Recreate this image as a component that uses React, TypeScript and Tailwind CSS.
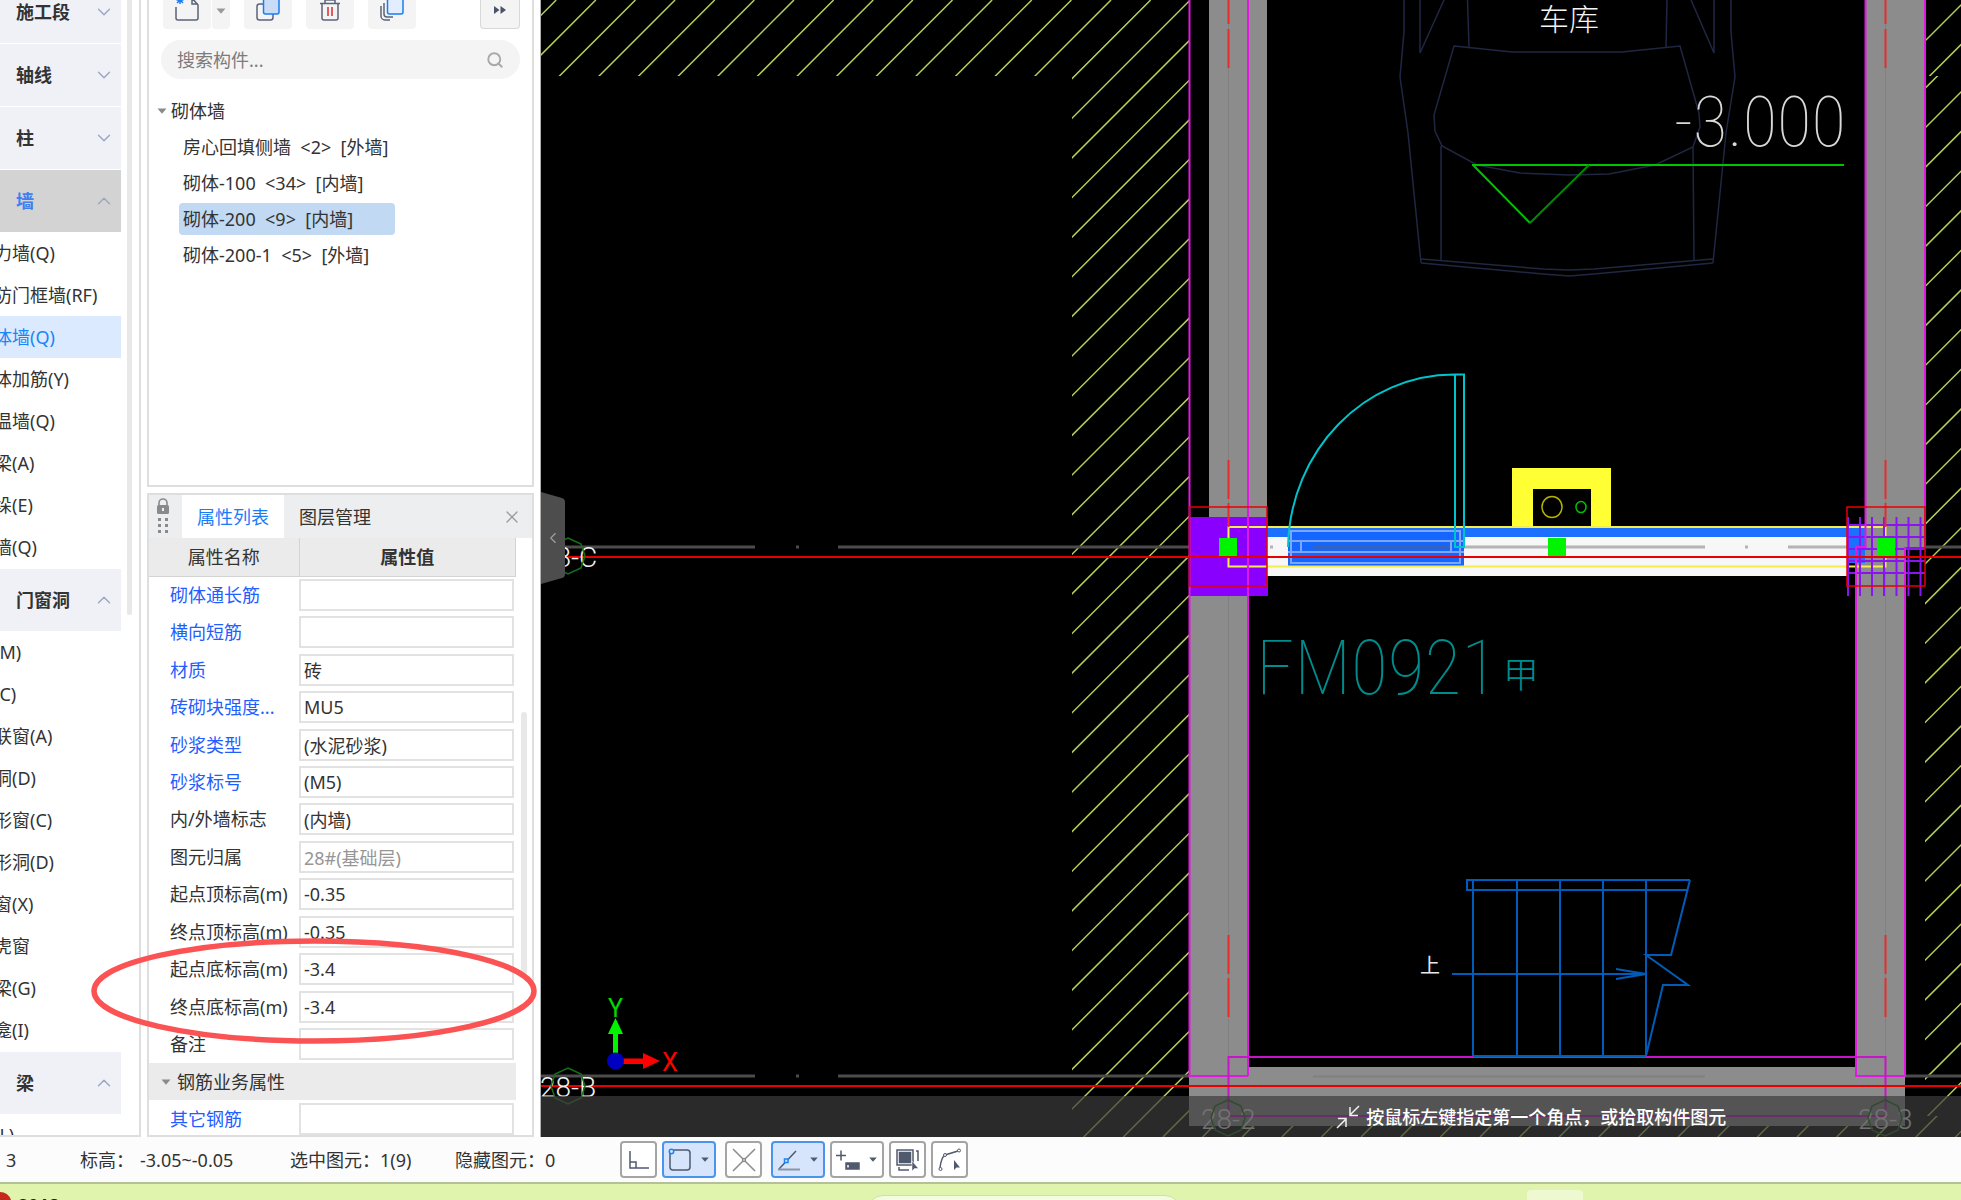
import type { ReactNode } from 'react';
import { ChevronDown, ChevronLeft, ChevronUp, Search, X } from 'lucide-react';

type Group = { name: string; open?: boolean; active?: boolean; items?: string[] };

const groups: Group[] = [
  { name: '施工段' },
  { name: '轴线' },
  { name: '柱' },
  {
    name: '墙',
    open: true,
    active: true,
    items: ['力墙(Q)', '防门框墙(RF)', '体墙(Q)', '体加筋(Y)', '温墙(Q)', '梁(A)', '垛(E)', '墙(Q)'],
  },
  {
    name: '门窗洞',
    open: true,
    items: ['(M)', '(C)', '联窗(A)', '洞(D)', '形窗(C)', '形洞(D)', '窗(X)', '虎窗', '梁(G)', '龛(I)'],
  },
  { name: '梁', open: true, items: ['(L)'] },
];

const components = [
  '房心回填侧墙  <2>  [外墙]',
  '砌体-100  <34>  [内墙]',
  '砌体-200  <9>  [内墙]',
  '砌体-200-1  <5>  [外墙]',
];

const properties = [
  { name: '砌体通长筋', value: '', blue: true },
  { name: '横向短筋', value: '', blue: true },
  { name: '材质', value: '砖', blue: true },
  { name: '砖砌块强度...', value: 'MU5', blue: true },
  { name: '砂浆类型', value: '(水泥砂浆)', blue: true },
  { name: '砂浆标号', value: '(M5)', blue: true },
  { name: '内/外墙标志', value: '(内墙)' },
  { name: '图元归属', value: '28#(基础层)', disabled: true },
  { name: '起点顶标高(m)', value: '-0.35' },
  { name: '终点顶标高(m)', value: '-0.35' },
  { name: '起点底标高(m)', value: '-3.4' },
  { name: '终点底标高(m)', value: '-3.4' },
  { name: '备注', value: '' },
  { name: '钢筋业务属性', value: '', group: true },
  { name: '其它钢筋', value: '', blue: true },
];

function Sidebar() {
  return (
    <nav className="flex w-[141px] shrink-0 overflow-hidden border-r-2 border-b-2 border-[#dedede] bg-white">
      <div className="-mt-5 flex w-[121px] shrink-0 flex-col">
        {groups.map((group) => (
          <div key={group.name}>
            <button
              className={`mt-px flex h-[62px] w-full items-center justify-between pr-1.5 pl-4 font-semibold ${
                group.active ? 'bg-[#d3d3d3] text-[#3f7ff0]' : 'bg-[#f0f1f6]'
              }`}
            >
              {group.name}
              {group.open ? (
                <ChevronUp className="size-[22px] text-[#9aa6c0]" strokeWidth={1.5} />
              ) : (
                <ChevronDown className="size-[22px] text-[#9aa6c0]" strokeWidth={1.5} />
              )}
            </button>
            {group.items?.map((item, i) => (
              <button
                key={i}
                className={`flex h-[42px] w-full items-center text-left whitespace-nowrap ${
                  item === '体墙(Q)' ? 'bg-[#dbeafe] text-[#1a86f5]' : ''
                }`}
              >
                <span className="-ml-1.5">{item}</span>
              </button>
            ))}
          </div>
        ))}
      </div>
      <div className="ml-1.5 h-[615px] w-[5px] shrink-0 rounded-b bg-[#e8e8e8]" />
    </nav>
  );
}

function Caret({ className = '' }: { className?: string }) {
  return (
    <svg viewBox="0 0 10 6" className={`h-1.5 w-2.5 shrink-0 ${className}`}>
      <path d="M0.5 0.5h9L5 5.8z" fill="currentColor" />
    </svg>
  );
}

function ToolButton({ label, children }: { label: string; children: ReactNode }) {
  return (
    <button aria-label={label} className="flex h-full w-12 items-end justify-center rounded-b bg-[#f4f4f4] pb-2">
      {children}
    </button>
  );
}

function ComponentList() {
  return (
    <section className="flex h-[487px] shrink-0 flex-col border-x-2 border-b-2 border-[#dedede]">
      <div className="flex h-[29px] items-stretch pr-3 pl-3.5">
        <ToolButton label="新建">
          <svg viewBox="0 0 24 22" className="h-[22px] w-6" fill="none" stroke="#5a6478" strokeWidth="1.5">
            <path d="M1 8v11a2 2 0 0 0 2 2h18a2 2 0 0 0 2-2V6l-6-7v6h6" />
            <path d="M1.500 1h7M5-3v8M2-2l6 6M8-2L2 4" stroke="#1a7cf5" />
          </svg>
        </ToolButton>
        <button aria-label="新建选项" className="ml-px flex w-[18px] items-start justify-center rounded-b bg-[#f4f4f4] pt-2 text-[#999]">
          <Caret className="w-2" />
        </button>
        <div className="ml-3.5 flex gap-3.5">
          <ToolButton label="复制">
            <svg viewBox="0 0 24 22" className="h-[22px] w-6" fill="none" strokeWidth="1.5">
              <rect x="1" y="5" width="16" height="16" rx="2.5" stroke="#5a6478" />
              <rect x="7.500" y="-2" width="15.500" height="17" rx="2" fill="#c9dcf5" stroke="#1a7cf5" />
            </svg>
          </ToolButton>
          <ToolButton label="删除">
            <svg viewBox="0 0 24 22" className="h-[22px] w-6" fill="none" stroke="#5a6478" strokeWidth="1.5">
              <path d="M2 4.500h20M7 4V1h10v3M4 5v14a2 2 0 0 0 2 2h12a2 2 0 0 0 2-2V5" />
              <path d="M10 8v9M14 8v9" stroke="#e02828" />
            </svg>
          </ToolButton>
          <ToolButton label="层间复制">
            <svg viewBox="0 0 24 22" className="h-[22px] w-6" fill="none" stroke="#5a6478" strokeWidth="1.5">
              <path d="M1 7v10a4 4 0 0 0 4 4h5M4 4v11a3 3 0 0 0 3 3h6" />
              <rect x="7.500" y="-2" width="15.500" height="17" rx="2" fill="#e2eefd" stroke="#1a7cf5" />
            </svg>
          </ToolButton>
        </div>
        <button
          aria-label="更多"
          className="ml-auto flex w-10 items-start justify-center rounded-b border-x border-b border-[#d8d8d8] bg-[#f4f4f4] pt-1.5"
        >
          <svg viewBox="0 0 12 8" className="h-2 w-3" fill="#4a5468">
            <path d="M0 0l5.500 4L0 8zM6.500 0L12 4l-5.500 4z" />
          </svg>
        </button>
      </div>
      <label className="mx-3 mt-[11px] flex h-[39px] items-center rounded-full bg-[#f4f4f4] pr-4 pl-4">
        <input
          aria-label="搜索构件"
          placeholder="搜索构件..."
          className="min-w-0 flex-1 bg-transparent outline-none placeholder:text-[#7c7c7c]"
        />
        <Search className="size-[18px] text-[#a8a8a8]" strokeWidth={2.5} />
      </label>
      <div className="mt-[14px] flex h-9 items-center gap-1 pl-2 text-[#8a8a8a]">
        <Caret />
        <span className="text-[#333]">砌体墙</span>
      </div>
      <ul className="pl-[30px]">
        {components.map((name, i) => (
          <li key={name} className="flex h-9 items-center">
            <button
              className={`h-8 w-[216px] rounded pl-1 text-left whitespace-pre ${i === 2 ? 'bg-[#c1d9f2]' : ''}`}
            >
              {name}
            </button>
          </li>
        ))}
      </ul>
    </section>
  );
}

function PropertyPanel() {
  return (
    <section className="mt-1.5 flex min-h-0 flex-1 flex-col overflow-hidden border-2 border-[#dedede]">
      <div className="flex h-[43px] shrink-0 items-stretch bg-[#edeef0]">
        <svg viewBox="0 0 33 43" className="h-[43px] w-[33px]" fill="#8a8a8e">
          <rect x="8" y="10" width="12" height="9" rx="1.500" />
          <path d="M10 11V8a4 4 0 0 1 8 0v3" fill="none" stroke="#8a8a8e" strokeWidth="1.600" />
          <rect x="13" y="13" width="2" height="3" fill="#edeef0" />
          {[23, 29, 35].map((y) => (
            <g key={y}>
              <rect x="9" y={y} width="3" height="3" />
              <rect x="16" y={y} width="3" height="3" />
            </g>
          ))}
        </svg>
        <button className="w-[102px] bg-white text-[#1a7cf5]">属性列表</button>
        <button className="w-[102px]">图层管理</button>
        <button aria-label="关闭" className="mr-2.5 ml-auto text-[#9a9a9a]">
          <X className="size-5" strokeWidth={1.5} />
        </button>
      </div>
      <div className="flex min-h-0 flex-1">
        <table className="h-[calc(100%+3px)] w-[367px] shrink-0 table-fixed border-collapse">
          <thead>
            <tr className="h-[38px] bg-[#ebebeb]">
              <th className="w-[150px] border-r border-b border-[#d4d4d4] font-normal">属性名称</th>
              <th className="border-r border-b border-[#d4d4d4] font-semibold">属性值</th>
            </tr>
          </thead>
          <tbody>
            {properties.map((row, i) =>
              row.group ? (
                <tr key={row.name} className="h-[37px]">
                  <td colSpan={2} className="bg-[#ebebeb] p-0">
                    <button className="flex items-center gap-1.5 pl-3 text-[#8a8a8a]">
                      <Caret />
                      <span className="text-[#333]">{row.name}</span>
                    </button>
                  </td>
                </tr>
              ) : (
                <tr key={row.name} className="h-[37px]">
                  <td className={`p-0 pl-[21px] whitespace-nowrap ${row.blue ? 'text-[#1f5eff]' : ''}`}>
                    <label htmlFor={`prop-${i}`}>{row.name}</label>
                  </td>
                  <td className="p-0 pr-0.5">
                    <input
                      id={`prop-${i}`}
                      defaultValue={row.value}
                      disabled={row.disabled}
                      className="block h-8 w-full border-2 border-[#e2e2e2] bg-white px-[3px] outline-none disabled:text-[#969696]"
                    />
                  </td>
                </tr>
              ),
            )}
          </tbody>
        </table>
        <div className="mt-[174px] ml-[5px] h-[263px] w-1.5 rounded bg-[#e8e8e8]" />
      </div>
    </section>
  );
}

// All hatch lines run at 45 degrees, so each is fixed by the sum x + y
function Hatch({ from, count }: { from: number; count: number }) {
  return (
    <path
      d={Array.from({ length: count }, (_, k) => {
        const sum = from + k * 39.63;
        return `M${sum} 0L${sum - 1137} 1137`;
      }).join('')}
      stroke="#b3cf58"
      strokeWidth="1.500"
    />
  );
}

function AxisMark({ x, y }: { x: number; y: number }) {
  return (
    <path
      transform={`translate(${x} ${y})`}
      d="M0-18L13-12L17 0L13 12L0 18L-13 12L-17 0L-13-12Z"
      stroke="#157015"
    />
  );
}

function Drawing() {
  return (
    <svg
      viewBox="541 0 1420 1137"
      preserveAspectRatio="xMinYMin slice"
      className="h-full w-full"
      fill="none"
      strokeWidth="1.500"
    >
      <clipPath id="hatch-left">
        <path d="M541 0H1189V76H541zM1072 76H1189V1137H1072zM1189 1116H1961V1137H1189z" />
      </clipPath>
      <clipPath id="hatch-right">
        <path d="M1925 76H1961V1116H1925z" />
      </clipPath>
      <clipPath id="hatch-corner">
        <path d="M1925 0H1961V76H1925z" />
      </clipPath>
      <g clipPath="url(#hatch-left)">
        <Hatch from={556.2} count={66} />
      </g>
      <g clipPath="url(#hatch-right)">
        <Hatch from={2013.4} count={28} />
      </g>
      <g clipPath="url(#hatch-corner)">
        <Hatch from={1966} count={3} />
      </g>

      {/* walls */}
      <path d="M363 547H1961M363 1076H1961" stroke="#4c4c4c" strokeWidth="3" strokeDasharray="392 41 3 39" />
      <g fill="#8c8c8c">
        <path d="M1209 0H1267V530H1209zM1189 590H1248V1126H1189z" />
        <path d="M1865 0H1925V547H1865zM1856 547H1905V1126H1856z" />
        <path d="M1189 1067H1905V1126H1189z" />
      </g>
      <path d="M1228.500 0V1096M1885.500 0V1096" stroke="#808080" strokeWidth="1" />
      <path d="M1313 1076.500H1705" stroke="#808080" strokeWidth="2" />

      {/* car */}
      <g stroke="#1f2743">
        <path d="M1404 0V32L1400 77L1408 133L1421 263M1731 0V32L1735 77L1726 133L1713 263" />
        <path d="M1420 0V53L1444 0M1714 0V53L1691 0M1467.500 0L1469 47M1667 0L1666 47" />
        <path d="M1454 46L1512 52H1622L1680 46L1699 113L1700 127L1693 147L1655 165L1609 174L1569 175L1520 173L1477 165L1442 146L1435 131L1434 115Z" />
        <path d="M1441 146V260M1693 147L1694 260" />
        <path d="M1421 259L1543 269L1569 270L1594 269L1713 259M1421 263L1543 274L1569 276L1594 274L1713 263" />
      </g>
      <text x="1539" y="30" fill="#f4f4f4" className="font-[Noto_Sans_CJK_SC] text-[30px] font-light">
        车库
      </text>
      <path d="M1472 165H1844" stroke="#00c400" strokeWidth="2" />
      <path d="M1473 165L1530 223" stroke="#00c400" strokeWidth="2" />
      <path d="M1530 223L1589 165" stroke="#008a00" strokeWidth="2" />
      <text x="1674" y="146" fill="#d8d8d8" className="font-[Roboto_Condensed] text-[71px] font-thin">
        -3.000
      </text>

      {/* socket box */}
      <path d="M1512 468H1611V527H1512z" fill="#ffff33" />
      <path d="M1533 489H1591V527H1533z" fill="#000" />
      <ellipse cx="1552" cy="507" rx="10" ry="10.500" stroke="#b4b400" />
      <ellipse cx="1581" cy="507" rx="5" ry="5.500" stroke="#00c000" />

      {/* selected wall */}
      <path d="M1189 517H1268V596H1189z" fill="#8a00ff" />
      <path d="M1267 528H1847V537H1267zM1847 528H1865V563H1847z" fill="#1c70ff" />
      <path d="M1267 537H1847V576H1267z" fill="#f7f7f7" />
      <path d="M1313 547H1705M1270 547H1273M1745 547H1748M1788 547H1847" stroke="#b4b4b4" strokeWidth="3" />
      <path d="M1288 530H1464V566H1288z" fill="#1566ff" />
      <path d="M1313 547H1452" stroke="#3c62b4" strokeWidth="3" />
      <path d="M1291 531H1460V563H1291zM1288 541H1464M1288 552H1464M1301 541V552M1451 541V552" stroke="#7ea6ff" strokeWidth="2" />
      <path d="M1228.500 527H1885.500V566.500H1228.500z" stroke="#f2ee4e" strokeWidth="2" />

      {/* door */}
      <path d="M1288 547C1290 450 1365 374 1455 374.500H1464V547H1455V374" stroke="#00c4cc" strokeWidth="2" />
      <text x="1256" y="694" fill="#008c8c" className="font-[Roboto_Condensed] text-[76px] font-thin">
        FM0921
      </text>
      <text x="1503" y="688" fill="#008c8c" className="font-[Noto_Sans_CJK_SC] text-[36px] font-light">
        甲
      </text>

      {/* columns and their grid */}
      <path
        d="M1848 517V596M1860 517V596M1872 517V596M1884 517V596M1896.500 517V596M1908.500 517V596M1920.500 517V596M1848 525H1925M1848 537H1925M1848 549H1925M1848 561H1925M1848 573H1925"
        stroke="#8a14f0"
        strokeWidth="2"
      />
      <path
        d="M1189.500 0V1076H1248M1248 0V1076M1865.500 0V547H1856V1076H1905V547M1925 0V547"
        stroke="#e018e0"
        strokeWidth="2"
      />
      <path d="M1228.500 1116V1057H1885.500V1116Z" stroke="#c814c8" strokeWidth="2" />
      <path
        d="M1228.500 0V24M1228.500 29V68M1228.500 460V499M1228.500 503V527M1228.500 935V974M1228.500 978V1017M1885.500 0V24M1885.500 29V68M1885.500 460V499M1885.500 503V527M1885.500 935V974M1885.500 978V1017"
        stroke="#e82c2c"
        strokeWidth="2"
      />
      <path d="M1189.500 507H1267V586H1189.500zM1847 507H1925V586H1847z" stroke="#e80000" />
      <path d="M541 557H1961M541 1086H1961" stroke="#e80000" strokeWidth="2" />
      <path d="M1219 538H1237V556H1219zM1548 538H1566V556H1548zM1877 538H1895V556H1877z" fill="#00f400" />

      {/* stairs */}
      <g stroke="#005cb8" strokeWidth="2">
        <path d="M1473 880V1056M1517 880V1056M1560 880V1056M1603 880V1056M1646 880V1056M1473 1056H1646" />
        <path d="M1690 880H1467V890H1688M1690 880L1671 955H1646L1688 985H1663L1646 1056" />
        <path d="M1452 974H1646L1616 969M1646 974L1616 979" />
      </g>
      <text x="1420" y="973" fill="#e8e8e8" className="font-[Noto_Sans_CJK_SC] text-[20px] font-normal">
        上
      </text>

      {/* axis labels */}
      <g className="font-[Roboto] text-[28px] font-light" fill="#f0f0f0">
        <text x="540" y="567">28-C</text>
        <text x="540" y="1097">28-B</text>
        <text x="1201" y="1129">28-2</text>
        <text x="1858" y="1129">28-3</text>
      </g>
      <AxisMark x={568} y={556} />
      <AxisMark x={568} y={1086} />
      <AxisMark x={1228} y={1118} />
      <AxisMark x={1885} y={1118} />

      {/* coordinate gizmo */}
      <path d="M613 1034H608L615.500 1018L623 1034H618V1055H613z" fill="#00f400" />
      <path d="M622 1058.500H643V1053L660 1061L643 1069V1064H622z" fill="#ff0000" />
      <circle cx="615.500" cy="1061" r="8.500" fill="#0000c0" />
      <g className="font-[Roboto] text-[25px] font-normal">
        <text x="608" y="1017" fill="#00d800">Y</text>
        <text x="662" y="1071" fill="#ff0000">X</text>
      </g>
    </svg>
  );
}

function Canvas() {
  return (
    <main className="relative min-w-0 flex-1 overflow-hidden bg-black">
      <Drawing />
      <button aria-label="收起面板" className="absolute top-[492px] left-0 h-[92px] w-6 text-[#a0a0a0]">
        <svg viewBox="0 0 24 92" className="absolute inset-0 h-full w-full">
          <path d="M0 0L21 6Q24 7 24 10V82Q24 85 21 86L0 92z" fill="#4d4d4d" />
        </svg>
        <ChevronLeft className="relative mx-auto size-[18px]" strokeWidth={1.5} />
      </button>
      <div className="absolute inset-x-0 bottom-0 flex h-[41px] items-center gap-1.5 bg-[#3c3c3c]/70 pl-[56%] font-medium whitespace-nowrap text-white">
        <svg viewBox="0 0 24 24" className="size-6 shrink-0" fill="none" stroke="#f0f0f0" strokeWidth="1.500">
          <path d="M23 1L14 10M14 2V10.500H22M1 23L10 14M2 13.500H10V22" />
        </svg>
        按鼠标左键指定第一个角点，或拾取构件图元
      </div>
    </main>
  );
}

function StatusButton({
  label,
  active,
  menu,
  className = '',
  children,
}: {
  label: string;
  active?: boolean;
  menu?: boolean;
  className?: string;
  children: ReactNode;
}) {
  return (
    <button
      aria-label={label}
      className={`flex h-[37px] items-center justify-center gap-2 rounded border-2 ${menu ? 'w-[54px]' : 'w-[37px]'} ${
        active ? 'border-[#4a94ee] bg-[#d6e5fb]' : 'border-[#a4a4a4] bg-white'
      } ${className}`}
    >
      <svg viewBox="0 0 24 24" className="size-6 shrink-0" fill="none" stroke="#505a6e" strokeWidth="1.500">
        {children}
      </svg>
      {menu && <Caret className="h-[5px] w-2 text-[#505a6e]" />}
    </button>
  );
}

function StatusBar() {
  return (
    <footer className="flex h-[47px] shrink-0 items-center border-b-2 border-[#b4c198] bg-[#fcfcfc] whitespace-nowrap">
      <div className="flex w-[620px] shrink-0 items-center">
        <span className="w-20 pl-1.5">3</span>
        <span className="w-[210px]">
          标高：<span className="ml-1.5">-3.05~-0.05</span>
        </span>
        <span className="w-[165px]">选中图元：1(9)</span>
        <span>隐藏图元：0</span>
      </div>
      <div className="flex gap-[5px]">
        <StatusButton label="正交">
          <path d="M3 3V20H22M3 14H9V20" />
        </StatusButton>
        <StatusButton label="矩形" active menu>
          <rect x="2" y="2" width="20" height="20" rx="3" />
          <circle cx="3.500" cy="3.500" r="2.200" stroke="#1a86f5" fill="#d6e5fb" />
        </StatusButton>
        <StatusButton label="交点" className="ml-1">
          <path d="M1 1L23 23M23 1L1 23" stroke="#8a8a8a" />
          <circle cx="12" cy="12" r="1.500" stroke="#8a8a8a" fill="#fff" />
        </StatusButton>
        <StatusButton label="极轴" active menu className="ml-1">
          <path d="M19 3L2 21" />
          <path d="M1 21.500H23" stroke="#8a94a8" strokeWidth="2" />
          <rect x="7.500" y="11" width="3.500" height="3.500" stroke="#1a86f5" fill="#d6e5fb" />
        </StatusButton>
        <StatusButton label="动态输入" menu>
          <path d="M0 7.500H10M5 2.500V12.500" />
          <rect x="10" y="15" width="13" height="6" fill="#505a6e" />
          <path d="M12 17V19.500" stroke="#fff" />
        </StatusButton>
        <StatusButton label="图元选择">
          <path d="M1 2H17V17H1zM20 3H22V13M3 19V22H13" />
          <rect x="3.500" y="4.500" width="11" height="10" fill="#505a6e" />
          <path d="M16 13V23L18.500 20.500H22.500Z" fill="#505a6e" stroke="#fff" strokeWidth="0.500" />
        </StatusButton>
        <StatusButton label="顶点编辑">
          <path d="M2 20Q3 10 7 7L20 3" />
          <circle cx="2.500" cy="21" r="1.500" fill="#fff" strokeWidth="1" />
          <circle cx="7" cy="7" r="1.500" fill="#fff" strokeWidth="1" />
          <circle cx="21" cy="2.500" r="1.500" fill="#fff" strokeWidth="1" />
          <path d="M16 12V22L18.500 19.500H22Z" fill="#505a6e" stroke="none" />
        </StatusButton>
      </div>
    </footer>
  );
}

export default function App() {
  return (
    <div className="flex h-screen flex-col overflow-hidden bg-white font-['Noto_Sans','Noto_Sans_CJK_SC',sans-serif] text-[18px] leading-6 text-[#333]">
      <div className="relative flex min-h-0 flex-1">
        <Sidebar />
        <div className="flex w-[400px] shrink-0 flex-col border-r border-[#b0b0b0] pr-1.5 pl-1.5">
          <ComponentList />
          <PropertyPanel />
        </div>
        <Canvas />
        <svg viewBox="0 0 446 108" className="pointer-events-none absolute bottom-[92px] left-[91px] h-[108px] w-[446px]">
          <ellipse cx="223" cy="54" rx="220" ry="50" fill="none" stroke="#fb5353" strokeWidth="5.500" />
        </svg>
      </div>
      <StatusBar />
      <div className="flex h-4 shrink-0 items-start overflow-hidden bg-[#e0f4ae]">
        <svg viewBox="0 0 12 8" className="mt-2 h-2 w-3" fill="#c4281e">
          <path d="M0 0Q8 0 11 8H0z" />
        </svg>
        <span className="mt-[9px] ml-1.5 text-[18px] leading-6 font-bold text-[#222]">2018</span>
        <div className="mt-[11px] ml-[808px] h-8 w-[314px] rounded-full border border-[#cfe3a0] bg-[#f3fce0]" />
        <div className="mt-1.5 ml-[346px] h-8 w-14 rounded bg-[#eef9d2]" />
      </div>
    </div>
  );
}
